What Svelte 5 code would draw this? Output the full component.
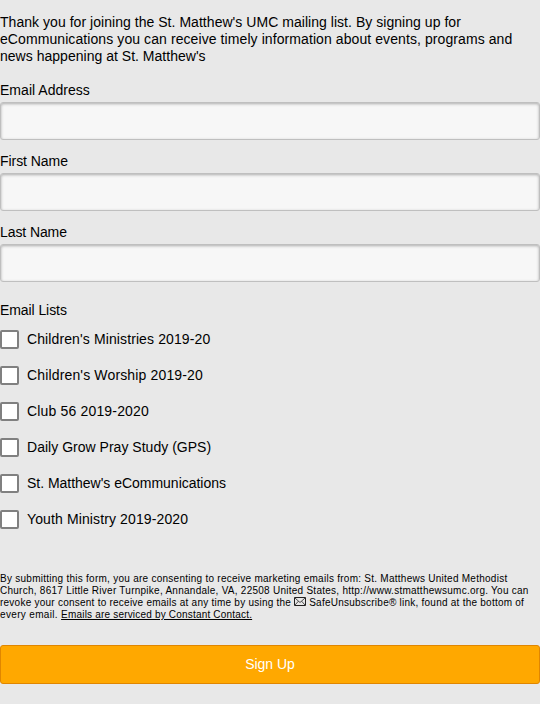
<script>
  const intro = [
    { text: "Thank you for joining the St. Matthew's UMC mailing list. By signing up for", spacing: 0.04 },
    { text: 'eCommunications you can receive timely information about events, programs and', spacing: 0.085 },
    { text: "news happening at St. Matthew's", spacing: 0.02 }
  ];
  const fields = [
    { text: 'Email Address', spacing: 0.03 },
    { text: 'First Name', spacing: -0.05 },
    { text: 'Last Name', spacing: -0.09 }
  ];
  const lists = [
    { text: "Children's Ministries 2019-20", spacing: 0.11 },
    { text: "Children's Worship 2019-20", spacing: 0.15 },
    { text: 'Club 56 2019-2020', spacing: 0.17 },
    { text: 'Daily Grow Pray Study (GPS)', spacing: 0.02 },
    { text: "St. Matthew's eCommunications", spacing: -0.02 },
    { text: 'Youth Ministry 2019-2020', spacing: 0.12 }
  ];
</script>

<form>
  <p class="intro">
    {#each intro as line}
      <span class="line" style="letter-spacing: {line.spacing}px">{line.text}</span>
    {/each}
  </p>
  {#each fields as field}
    <label class="field"><span style="letter-spacing: {field.spacing}px">{field.text}</span><input type="text" /></label>
  {/each}
  <fieldset>
    <legend>Email Lists</legend>
    {#each lists as list}
      <label class="check"><input type="checkbox" /><span style="letter-spacing: {list.spacing}px">{list.text}</span></label>
    {/each}
  </fieldset>
  <p class="legal">
    <span class="line one">By submitting this form, you are consenting to receive marketing emails from: St. Matthews United Methodist</span>
    <span class="line two">Church, 8617 Little River Turnpike, Annandale, VA, 22508 United States, http://www.stmatthewsumc.org. You can</span>
    <span class="line three">revoke your consent to receive emails at any time by using the <svg width="12" height="9" viewBox="0 0 12 9" fill="none" stroke="#222"><path d="M.5 .5h11v8H.5z" /><path stroke-width=".8" d="M1 1L6 5.5L11 1M1 8L4.4 4.2M11 8L7.6 4.2" /></svg> SafeUnsubscribe® link, found at the bottom of</span>
    <span class="line four">every email. <a href="#about">Emails are serviced by Constant Contact.</a></span>
  </p>
  <button type="button">Sign Up</button>
</form>

<style>
  :global(body) { margin: 0; background: #e8e8e8; }
  form { box-sizing: border-box; height: 704px; padding-top: 14px; font: 14px/17px "Liberation Sans", Arial, sans-serif; color: #000; }
  p { margin: 0; }
  .line { display: block; white-space: nowrap; }
  .intro { margin-bottom: 17px; }
  .field { display: block; height: 71px; }
  .field span { display: block; height: 20px; }
  .field input { display: block; box-sizing: border-box; width: 100%; height: 38px; margin: 0; padding: 8px; border: 1px solid #bfbfbf; border-radius: 3px; background: #f7f7f7; box-shadow: inset 0 1px 3px rgba(0,0,0,.3); font: inherit; outline: 0; }
  fieldset { margin: 7px 0 0; padding: 0; border: 0; }
  legend { padding: 0; height: 19px; letter-spacing: -.08px; }
  .check { display: flex; align-items: center; height: 36px; }
  .check input { appearance: none; box-sizing: border-box; flex: none; width: 19px; height: 19px; margin: 0 8px 0 0; border: 2px solid #808080; border-radius: 2px; background: #fff; }
  .legal { margin-top: 36px; height: 72px; font-size: 10px; line-height: 12px; }
  .one { letter-spacing: .26px; }
  .two { letter-spacing: .257px; }
  .three { letter-spacing: .24px; }
  .four { letter-spacing: .34px; }
  .four a { letter-spacing: .19px; }
  .legal svg { display: inline-block; vertical-align: 0; }
  a { color: inherit; }
  button { display: block; width: 100%; height: 39px; margin: 0; padding: 0; border: 1px solid #e08600; border-radius: 3px; background: #ffa800; color: #fff; font: inherit; letter-spacing: -.05px; }
</style>
